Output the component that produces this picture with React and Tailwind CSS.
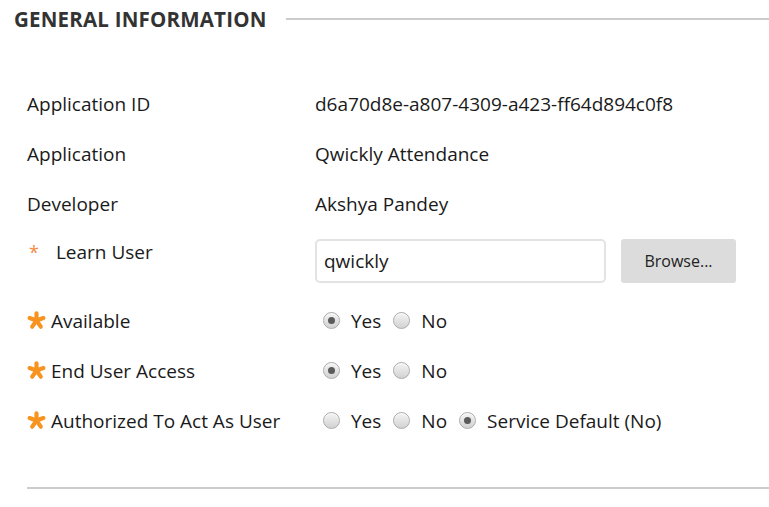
import React from 'react';

function Star() {
  return (
    <svg width="19" height="19" viewBox="0 0 20 20" className="shrink-0">
      <g stroke="#f7931e" strokeWidth="4.4" strokeLinecap="round">
        <line x1="10" y1="10" x2="10" y2="2.5" />
        <line x1="10" y1="10" x2="17.2" y2="7.4" />
        <line x1="10" y1="10" x2="2.8" y2="7.4" />
        <line x1="10" y1="10" x2="14.5" y2="16.5" />
        <line x1="10" y1="10" x2="5.5" y2="16.5" />
      </g>
    </svg>
  );
}

function Radio({ checked }) {
  return (
    <span className="inline-flex h-[17px] w-[17px] shrink-0 items-center justify-center rounded-full border border-[#aaaaaa] bg-gradient-to-b from-[#f4f4f4] to-[#d2d2d2] shadow-[inset_0_1px_1px_rgba(255,255,255,0.8)]">
      {checked && <span className="h-[7px] w-[7px] rounded-full bg-[#5a5a5a]" />}
    </span>
  );
}

function RadioGroup({ options, value }) {
  return (
    <div className="ml-[8px] flex items-center">
      {options.map((opt) => (
        <label key={opt} className="mr-[12px] flex items-center gap-[11px]">
          <Radio checked={opt === value} />
          <span>{opt}</span>
        </label>
      ))}
    </div>
  );
}

function Row({ label, required, children }) {
  return (
    <div className="flex h-[50px] items-center">
      <div className="flex w-[288px] items-center">
        {required && <span className="mr-[5px]"><Star /></span>}
        <span>{label}</span>
      </div>
      <div>{children}</div>
    </div>
  );
}

export default function App() {
  return (
    <div className="min-h-screen bg-white font-['Open_Sans',sans-serif] text-[19px] text-[#1a1a1a]">
      <div className="flex items-center pt-[4px]">
        <h2 className="pl-[14px] text-[20.5px] font-bold uppercase tracking-[0.2px] text-[#333]">General Information</h2>
        <div className="ml-[19px] h-[2px] flex-1 bg-[#cccccc]" />
      </div>

      <div className="mt-[44px] pl-[27px]">
        <Row label="Application ID">d6a70d8e-a807-4309-a423-ff64d894c0f8</Row>
        <Row label="Application">Qwickly Attendance</Row>
        <Row label="Developer">Akshya Pandey</Row>

        <div className="flex h-[67px] pt-[10px]">
          <div className="flex w-[288px] items-start">
            <span className="ml-[2px] mr-[17px] text-[18px] leading-[26px] text-[#f58a42]">*</span>
            <span className="leading-[26px]">Learn User</span>
          </div>
          <div className="flex gap-[15px]">
            <input
              defaultValue="qwickly"
              className="h-[44px] w-[291px] rounded-[5px] border-2 border-[#e3e3e3] px-[7px] text-[19px] text-[#1a1a1a] outline-none"
            />
            <button className="h-[44px] w-[115px] rounded-[3px] bg-[#dcdcdc] text-[16px] text-[#222]">Browse...</button>
          </div>
        </div>

        <Row label="Available" required>
          <RadioGroup options={['Yes', 'No']} value="Yes" />
        </Row>
        <Row label="End User Access" required>
          <RadioGroup options={['Yes', 'No']} value="Yes" />
        </Row>
        <Row label="Authorized To Act As User" required>
          <RadioGroup options={['Yes', 'No', 'Service Default (No)']} value="Service Default (No)" />
        </Row>

        <div className="mt-[41px] h-[2px] bg-[#cccccc]" />
      </div>
    </div>
  );
}
